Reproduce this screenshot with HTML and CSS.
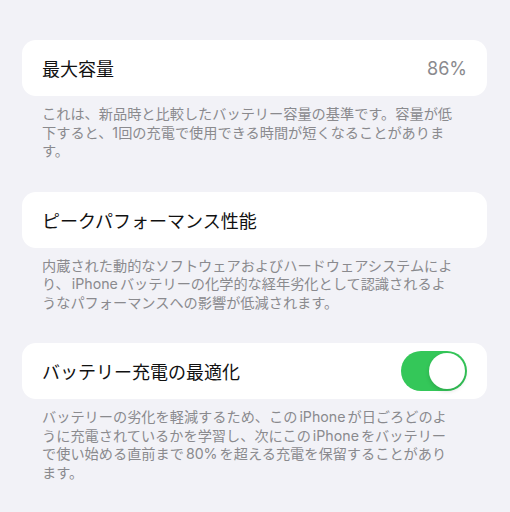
FILE: index.html
```html
<!DOCTYPE html>
<html lang="ja">

<head>
  <meta charset="UTF-8">
  <meta name="viewport" content="width=device-width, initial-scale=1.0">
  <title>バッテリーの状態と充電</title>
  <link rel="stylesheet" href="styles.css">
</head>

<body>
  <div class="container">
    <div class="group">
      <div class="cell">
        <span class="label">最大容量</span>
        <span class="value">86%</span>
      </div>
      <p class="footer">これは、新品時と比較したバッテリー容量の基準です。容量が低<br>下すると、1回の充電で使用できる時間が短くなることがありま<br>す。</p>
    </div>

    <div class="group">
      <div class="cell">
        <span class="label">ピークパフォーマンス性能</span>
      </div>
      <p class="footer">内蔵された動的なソフトウェアおよびハードウェアシステムによ<br>り、<span class="latin">iPhone</span>バッテリーの化学的な経年劣化として認識されるよ<br>うなパフォーマンスへの影響が低減されます。</p>
    </div>

    <div class="group">
      <div class="cell">
        <span class="label">バッテリー充電の最適化</span>
        <span class="switch on"><span class="knob"></span></span>
      </div>
      <p class="footer">バッテリーの劣化を軽減するため、この<span class="latin">iPhone</span>が日ごろどのよ<br>うに充電されているかを学習し、次にこの<span class="latin">iPhone</span>をバッテリー<br>で使い始める直前まで<span class="latin">80%</span>を超える充電を保留することがあり<br>ます。</p>
    </div>
  </div>
</body>

</html>
```

FILE: styles.css
```css
body {
  margin: 0;
  background-color: #f2f2f7;
  font-family: Inter, "Noto Sans CJK JP", sans-serif;
}

.container {
  padding: 40px 23px 0 22px;
}

.group {
  margin-bottom: 31px;
}

.cell {
  display: flex;
  align-items: center;
  justify-content: space-between;
  height: 56px;
  padding: 0 20px;
  background-color: #fff;
  border-radius: 14px;
}

.label {
  font-size: 18px;
  color: #111;
}

.value {
  font-size: 18px;
  color: #8a8a8e;
}

.footer {
  margin: 9px 0 0;
  padding: 0 20px;
  font-size: 14.2px;
  line-height: 18.5px;
  color: #8a8a8e;
  white-space: nowrap;
}

.latin {
  margin: 0 2px;
}

.switch {
  display: flex;
  justify-content: flex-end;
  align-items: center;
  width: 66px;
  height: 40px;
  padding: 0 2px;
  box-sizing: border-box;
  border-radius: 20px;
  background-color: #e9e9eb;
}

.switch.on {
  background-color: #34c759;
}

.knob {
  width: 36px;
  height: 36px;
  border-radius: 50%;
  background-color: #fff;
  box-shadow: 0 2px 4px rgba(0, 0, 0, 0.15);
}
```
